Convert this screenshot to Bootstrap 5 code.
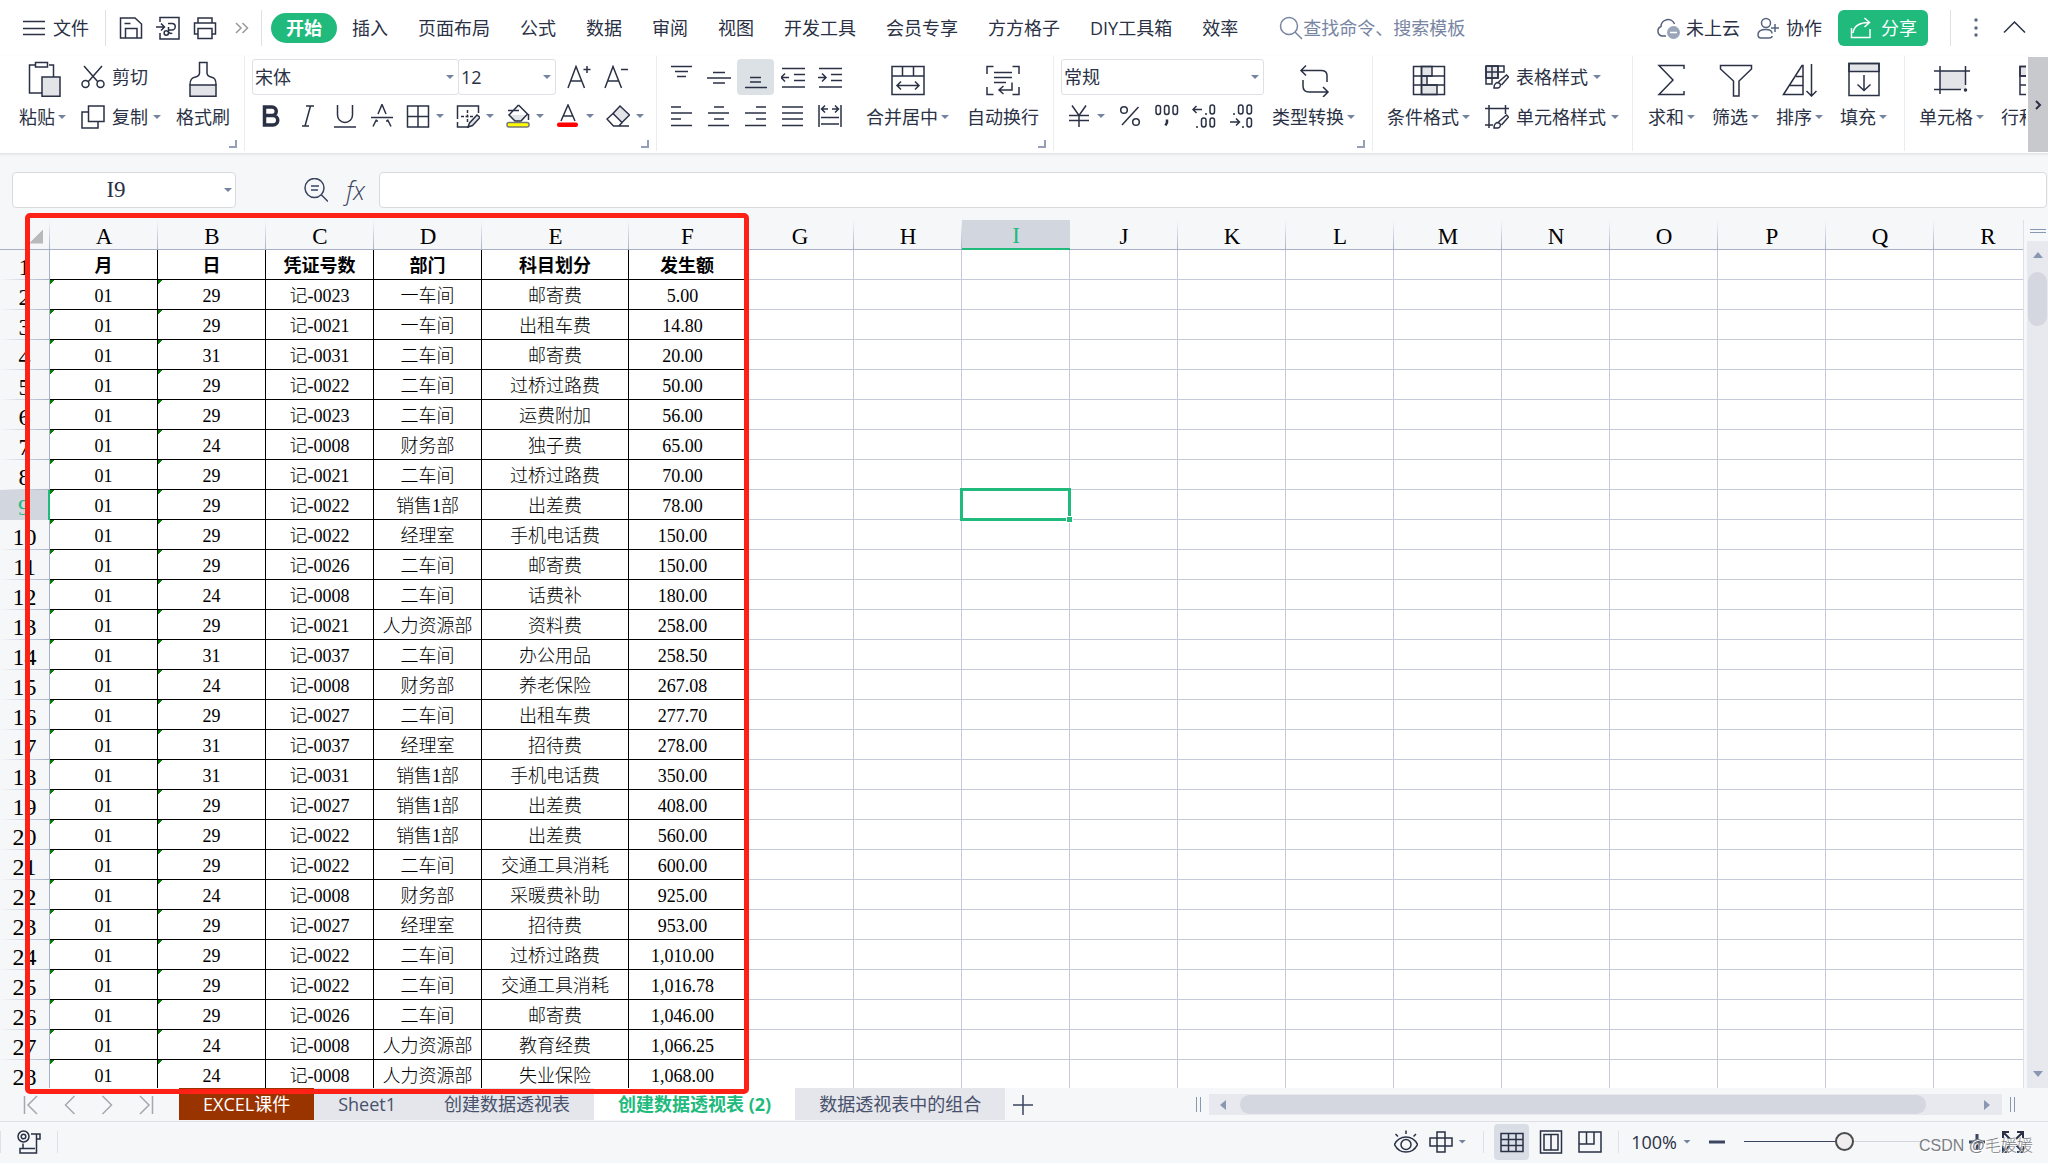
<!DOCTYPE html>
<html lang="zh-CN">
<head>
<meta charset="utf-8">
<meta name="viewport" content="width=device-width, initial-scale=1">
<title>创建数据透视表 (2)</title>
<link href="https://cdn.jsdelivr.net/npm/bootstrap@5.3.0/dist/css/bootstrap.min.css" rel="stylesheet">
<style>
:root{--ink:#2a3145;--soft:#7785a3;--green:#21ba7d;--pane:#f6f7f9;--line:#dfe0e5;--gridline:#c6cada;--headline:#a8b1c8}
body{font-family:"Open Sans","Noto Sans CJK SC",sans-serif;font-size:18px;font-weight:400;line-height:24px;color:var(--ink);background:var(--pane)}
button,input,select{font:inherit;color:inherit}
button{background:none;border:0;padding:0;color:inherit;white-space:nowrap}
svg{display:block;flex:none}
svg:not([fill]){fill:none}
svg:not([stroke]){stroke:currentColor}
svg:not([stroke-width]){stroke-width:1.5}
.ic{width:24px;height:24px}
.ic-lg{width:36px;height:36px}
.arr{display:block;flex:none;width:8px;height:4px;background:#7484a0;clip-path:polygon(0 0,100% 0,50% 100%)}
.fill{fill:#e3e4e8}
/* menu line */
.menubar{height:56px;background:#fff;padding-right:22px}
.file-btn{padding:0 16px 0 22px;gap:7px}
.rule{width:1px;height:36px;background:var(--line)}
.quick{gap:13px;padding:0 7px 0 13px}
.tabs-main{padding-left:9px}
.tabs-main a{color:inherit;text-decoration:none;padding:3px 15px;border-radius:15px;white-space:nowrap}
.tabs-main a.on{background:var(--green);color:#fff;font-weight:700}
.finder{margin-left:26px;color:var(--soft)}
.finder input{width:190px;border:0;outline:0;background:none;padding:0}
.finder input::placeholder{color:var(--soft);opacity:1}
.acct{gap:6px;margin-right:16px}
.share{height:36px;width:90px;border-radius:6px;background:var(--green);color:#fff;gap:8px;margin-right:22px}
/* ribbon */
.ribbon{background:#fff;height:98px;border-bottom:1px solid #e3e4e6;box-shadow:0 1px 3px #0000000f}
.ribbon-body{min-width:0;height:95px}
.grp{position:relative;flex:none;display:flex;padding-top:3px;border-right:1px solid #ebecef}
.grp:last-child{border:0}
.launch{position:absolute;right:7px;bottom:3px;width:8px;height:8px;border:solid #95a0b8;border-width:0 2px 2px 0}
.big{display:flex;flex-direction:column;align-items:center;gap:8px;padding-top:2px;height:80px}
.lbl{display:flex;align-items:center;gap:3px}
.pair{display:flex;flex-direction:column;gap:4px}
.pair button{display:flex;align-items:center;height:36px;gap:7px}
.pair .arr{margin-left:-2px}
.tools{display:flex;align-items:center;height:36px}
.stack{display:flex;flex-direction:column;gap:3px}
.tool{width:37px;height:36px;display:flex;align-items:center;justify-content:center;border-radius:4px}
.tool.on{background:#dce1e6}
.drop{width:50px;height:36px;display:flex;align-items:center}
.drop svg{margin:0 6px}
.pick{position:relative}
.pick select{appearance:none;width:100%;height:36px;border:1px solid var(--line);background:#fff;border-radius:3px;padding:0 4px 0 2px;outline:0}
.pick .arr{position:absolute;right:5px;top:16px;pointer-events:none}
.w-font{width:207px}.w-size{width:98px;margin:0 4px 0 -1px}.w-num{width:203px}
.more{width:20px;height:95px;margin:1px 0 0 2px;background:#c8c9cd;display:flex;align-items:center;justify-content:center}
/* formula line */
.formula{padding:18px 1px 12px 12px}
.formula input{height:36px;border:1px solid #d8dade;border-radius:4px;background:#fff;outline:0}
.namebox{position:relative;width:224px;margin-right:68px}
.namebox input{width:100%;padding-right:18px;text-align:center;font-family:"Liberation Serif",serif;font-size:23px}
.namebox .arr{position:absolute;right:4px;top:16px}
.fx{font-style:italic;font-weight:300;font-size:25px;width:25px;margin:0 11px 0 15px;color:#3b4560}
/* sheet */
.sheet{position:relative;min-height:0}
.cells{overflow:hidden;min-width:0;border-right:1px solid var(--line);height:100%}
.cells table{table-layout:fixed;width:2042px;border-collapse:separate;border-spacing:0;color:#000;font-family:"Liberation Serif","Noto Sans CJK SC",serif;font-weight:300}
.cells th,.cells td{height:30px;padding:2px 0 0;text-align:center;line-height:26px;white-space:nowrap;overflow:visible}
.cells td{background-color:#fff;border-right:1px solid var(--gridline);border-bottom:1px solid var(--gridline)}
.cells td.d{border-color:#000}
.cells td.h{font-weight:700}
.cells td.amt{padding-right:9px}
.cells td.flag{background-image:linear-gradient(135deg,#008000 3px,transparent 3px)}
.cells thead th{font-size:23px;font-weight:400;padding-top:4px;line-height:24px;border-bottom:1px solid var(--headline);background:linear-gradient(to bottom,transparent,var(--headline)) right/1px 100% no-repeat}
.cells thead th.cur{background:#d2d6df;color:var(--green);border-bottom:2px solid var(--green)}
.cells tbody th{font-size:24px;font-weight:400;padding-top:3px;line-height:24px;border-right:1px solid var(--headline);background:linear-gradient(to right,transparent,var(--headline)) bottom/100% 1px no-repeat}
.cells tbody th.cur{background:#d2d6df;color:var(--green);border-right:2px solid var(--green)}
.all::after{content:"";display:block;width:14px;height:14px;margin:4px 0 0 29px;background:#b9b9b9;clip-path:polygon(100% 0,100% 100%,0 100%)}
.cells td.sel{position:relative}
.sel::before{content:"";position:absolute;inset:-2px;border:3px solid var(--green);z-index:1}
.sel::after{content:"";position:absolute;right:-4px;bottom:-4px;width:7px;height:7px;background:var(--green);border:1px solid #fff;z-index:2}
.frame{position:absolute;left:25px;top:-7px;bottom:-6px;width:724px;border:5px solid #ff2116;border-radius:5px;z-index:3;pointer-events:none}
.vbar{width:24px;padding-left:3px}
.split{width:16px;height:4px;border:solid #8a97b2;border-width:1px 0;margin:9px auto 8px}
.vtrack{background:#e8e9ef}
.vthumb{width:19px;height:54px;border-radius:10px;background:#d4d7e0}
/* sheet tabs */
.tabline{height:34px;border-bottom:1px solid var(--line)}
.nav-sheets{width:179px;padding:0 25px 0 23px;color:#a6a8ae}
.stab{height:32px;line-height:32px;padding:0 24px;background:#e5e6ec;color:#47516b;text-decoration:none;white-space:nowrap}
.stab.brown{background:#993300;color:#fff}
.stab.on{background:#fff;color:var(--green);font-weight:700}
.grip{width:5px;height:15px;border:solid #8a97b2;border-width:0 1px}
.htrack{height:21px;width:793px;background:#e8e9ef;padding:1px 12px 1px 11px;margin:0 8px}
.hthumb{height:19px;width:686px;border-radius:10px;background:#d4d7e0}
/* status line */
.status{height:41px;position:relative;padding:0 23px 2px 0}
.status .rule{height:22px}
.view{width:35px;height:36px;display:flex;align-items:center;justify-content:center;border-radius:4px}
.view.on{background:#d9dee6}
.zoomer{appearance:none;width:201px;height:20px;margin:0 24px 0 18px;background:linear-gradient(90deg,#3b4560 50%,#d2d5de 50%) center/100% 1px no-repeat}
.zoomer::-webkit-slider-thumb{appearance:none;width:19px;height:19px;border-radius:50%;border:2px solid #4b4b4b;background:#efeded}
.mark-csdn{position:absolute;right:15px;top:12px;font-family:"Liberation Sans","Noto Sans CJK SC",sans-serif;font-size:16px;font-weight:300;color:#7d7f84;text-shadow:1px 1px 0 #fff}
</style>
<script src="https://cdn.jsdelivr.net/npm/bootstrap@5.3.0/dist/js/bootstrap.bundle.min.js"></script>
</head>
<body class="vh-100 d-flex flex-column overflow-hidden">

<header class="menubar d-flex align-items-center flex-shrink-0">
  <button class="file-btn d-flex align-items-center"><svg class="ic" viewBox="0 0 24 24"><path d="M1 5.500h22M1 12.500h22M1 18.500h22"/></svg>文件</button>
  <span class="rule"></span>
  <div class="quick d-flex align-items-center">
    <button aria-label="保存"><svg class="ic" viewBox="0 0 24 24"><path d="M1.500 2h14.500l6.500 6v14H1.500zM6.500 22V12.500H18V22M5.500 7.500h6"/></svg></button>
    <button aria-label="输出为PDF"><svg class="ic" viewBox="0 0 24 24"><path d="M4 6V1.500h19v21.500H4V17M0 11h8M5 7.500l3.500 3.500L5 14.500M12 7.500h4a3.200 3.200 0 0 1 0 6.500h-3.500M12.500 11v6a2.200 2.200 0 1 1-2.200-2.200c2 0 3 4.200 6 2.200"/></svg></button>
    <button aria-label="打印"><svg class="ic" viewBox="0 0 24 24"><path d="M5 7V2h14v5M5 18H1.500V7h21v11H19M5 12.500h14v10H5z"/></svg></button>
    <button aria-label="更多"><svg class="ic" viewBox="0 0 24 24" stroke="#9a9a9a"><path d="M6 7l5 5-5 5M12.500 7l5 5-5 5"/></svg></button>
  </div>
  <span class="rule"></span>
  <nav class="tabs-main d-flex align-items-center">
    <a href="#" class="on">开始</a><a href="#">插入</a><a href="#">页面布局</a><a href="#">公式</a><a href="#">数据</a><a href="#">审阅</a><a href="#">视图</a><a href="#">开发工具</a><a href="#">会员专享</a><a href="#">方方格子</a><a href="#">DIY工具箱</a><a href="#">效率</a>
  </nav>
  <label class="finder d-flex align-items-center"><svg class="ic" viewBox="0 0 24 24"><circle cx="10" cy="10" r="8.500"/><path d="M16 16l7 7"/></svg><input type="text" placeholder="查找命令、搜索模板" aria-label="查找命令"></label>
  <div class="d-flex align-items-center ms-auto">
    <button class="acct d-flex align-items-center"><svg class="ic" viewBox="0 0 24 24" stroke="#56617c"><path d="M10 20H6a5 5 0 0 1-1-9.500A7 7 0 0 1 18.500 8"/><circle cx="17.500" cy="16.500" r="6.500" fill="#9ba5ba" stroke="none"/><path d="M14 16.500h7" stroke="#fff"/></svg>未上云</button>
    <button class="acct d-flex align-items-center"><svg class="ic" viewBox="0 0 24 24" stroke="#56617c"><circle cx="10" cy="7" r="4.500"/><path d="M16 17.500c0-3-2-4-6-4s-8 1-8 5c0 3 1 3.500 3 3.500h8c2 0 3-1 3-2M19 8v8M15 12h8"/></svg>协作</button>
    <button class="share d-flex align-items-center justify-content-center"><svg class="ic" viewBox="0 0 24 24"><path d="M2.500 12v9.500h18.500V13M4 17c1-7 6-10.500 16-10.500M15.500 2l5 4.500-5 4.500"/></svg>分享</button>
    <span class="rule"></span>
    <button class="ms-3" aria-label="更多选项"><svg class="ic" viewBox="0 0 24 24" stroke="none" fill="#5c6680"><circle cx="9" cy="4" r="1.700"/><circle cx="9" cy="12" r="1.700"/><circle cx="9" cy="19" r="1.700"/></svg></button>
    <button style="margin-left:11px" aria-label="折叠功能区"><svg class="ic" viewBox="0 0 24 24"><path d="M2 16.500L12.500 6 23 16.500"/></svg></button>
  </div>
</header>

<section class="ribbon d-flex flex-shrink-0">
  <div class="ribbon-body d-flex flex-grow-1 overflow-hidden">
    <div class="grp" style="padding-left:19px;padding-right:14px;gap:15px">
      <button class="big"><svg class="ic-lg" viewBox="0 0 36 36"><path d="M10 4H4.500v28H17M24 4h4.500v12M10.500 1.500h12V6h-12z"/><path class="fill" d="M17 16h18v19.200H17z"/></svg><span class="lbl">粘贴<i class="arr"></i></span></button>
      <div class="pair">
        <button><svg class="ic" viewBox="0 0 24 24"><path d="M3 1l14 16M21 1L7 17"/><circle cx="4.500" cy="19" r="3.500"/><circle cx="19.500" cy="19" r="3.500"/></svg>剪切</button>
        <button><svg class="ic" viewBox="0 0 24 24"><path d="M7.500 1h15.500v15.500H7.500zM7.500 7H1v16h16v-6.500"/></svg>复制<i class="arr"></i></button>
      </div>
      <button class="big"><svg class="ic-lg" viewBox="0 0 36 36"><path class="fill" d="M5 24h26v11.200H5z"/><path d="M5 24c0-6 2-7 5.500-8 3-.8 4-1.500 4-4V1.500h7.500V12c0 2.500 1 3.200 4 4 3.500 1 5 2 5 8"/></svg><span class="lbl">格式刷</span></button>
      <i class="launch"></i>
    </div>

    <div class="grp" style="padding-left:7px;padding-right:6px">
      <div class="stack">
        <div class="tools">
          <div class="pick w-font"><select aria-label="字体"><option>宋体</option></select><i class="arr"></i></div>
          <div class="pick w-size"><select aria-label="字号"><option>12</option></select><i class="arr"></i></div>
          <button class="tool" aria-label="增大字号"><svg class="ic" viewBox="0 0 24 24"><path d="M1 23L9 1.500 17.500 23M4 16h10.500M16.500 4.500h7M20 1v7"/></svg></button>
          <button class="tool" aria-label="减小字号"><svg class="ic" viewBox="0 0 24 24"><path d="M1 23L9 1.500 17.500 23M4 16h10.500M17 4.500h7"/></svg></button>
        </div>
        <div class="tools">
          <button class="tool" aria-label="加粗"><svg class="ic" viewBox="0 0 24 24" stroke-width="3.500"><path d="M5.500 3h7.500a4.200 4.200 0 0 1 0 8.500H5.500zM5.500 11.500h8.500a4.600 4.600 0 0 1 0 9.500H5.500z"/></svg></button>
          <button class="tool" aria-label="倾斜"><svg class="ic" viewBox="0 0 24 24"><path d="M10 2h8M6 22h7M14.500 2L9 22"/></svg></button>
          <button class="tool" aria-label="下划线"><svg class="ic" viewBox="0 0 24 24"><path d="M4.500 1v10a7.500 7.500 0 0 0 15 0V1M1 23h22"/></svg></button>
          <button class="tool" aria-label="删除线"><svg class="ic" viewBox="0 0 24 24"><path d="M8 10l4-9.500L16 10M1 13.500h22M6.500 15.500L3 22.500M17.500 15.500L21 22.500M6 17h2M16 17h2"/></svg></button>
          <button class="drop" aria-label="边框"><svg class="ic" viewBox="0 0 24 24"><path d="M1.500 2h21v21h-21zM12 2v21M1.500 12.500h21"/></svg><i class="arr"></i></button>
          <button class="drop" aria-label="绘制边框"><svg class="ic" viewBox="0 0 24 24"><path d="M1.500 15V2h21v7M1.500 18v5H13"/><path d="M11.500 6v12M5 12.500h12" stroke-dasharray="3 1.500"/><path class="fill" d="M12 23l1.500-4 7.500-8 3 2.500-7.500 8z"/></svg><i class="arr"></i></button>
          <button class="drop" aria-label="填充颜色"><svg class="ic" viewBox="0 0 24 24"><path class="fill" d="M3 11h18l-5 6H9z" stroke="none"/><path d="M2 6.500h11M12.500 1l9 9-6.500 7H9L3 11 12.500 1M22.500 10v6"/><rect x="1" y="18.500" width="22" height="4.500" rx="2" fill="#ff0" stroke="#777"/></svg><i class="arr"></i></button>
          <button class="drop" aria-label="字体颜色"><svg class="ic" viewBox="0 0 24 24"><path d="M5 17l7-16 7 16M7.500 12h9"/><rect x="1" y="18.500" width="21" height="4.500" rx="2" fill="red" stroke="none"/></svg><i class="arr"></i></button>
          <button class="drop" aria-label="清除"><svg class="ic" viewBox="0 0 24 24"><path class="fill" d="M14 2l9.500 9-7.500 7.500-9-9z"/><path d="M7 9.500L1 15l6.500 7H13l3-3.500M7.500 22H23"/></svg><i class="arr"></i></button>
        </div>
      </div>
      <i class="launch"></i>
    </div>

    <div class="grp" style="padding-left:6px;padding-right:14px;gap:18px">
      <div class="stack">
        <div class="tools">
          <button class="tool" aria-label="顶端对齐"><svg class="ic" viewBox="0 0 24 24"><path d="M1 1.500h21M5 6.500h13M7 11.500h9"/></svg></button>
          <button class="tool" aria-label="垂直居中"><svg class="ic" viewBox="0 0 24 24"><path d="M6 7.500h12M0 13h24M6 18h12"/></svg></button>
          <button class="tool on" aria-label="底端对齐"><svg class="ic" viewBox="0 0 24 24"><path d="M6 12.500h11M6 17h11M1 22.500h22"/></svg></button>
          <button class="tool" aria-label="减少缩进"><svg class="ic" viewBox="0 0 24 24"><path d="M1 3.500h23M13 9.500h11M13 15.500h11M1 22h23M0 12.500h8M4 8.500l-4 4 4 4"/></svg></button>
          <button class="tool" aria-label="增加缩进"><svg class="ic" viewBox="0 0 24 24"><path d="M1 3.500h23M13 9.500h11M13 15.500h11M1 22h23M0 12.500h8M4 8.500l4 4-4 4"/></svg></button>
        </div>
        <div class="tools">
          <button class="tool" aria-label="左对齐"><svg class="ic" viewBox="0 0 24 24"><path d="M1 3h10M1 9h21M1 15h10M1 21.500h21"/></svg></button>
          <button class="tool" aria-label="水平居中"><svg class="ic" viewBox="0 0 24 24"><path d="M7 3h10M1 9h21M7 15h10M1 21.500h21"/></svg></button>
          <button class="tool" aria-label="右对齐"><svg class="ic" viewBox="0 0 24 24"><path d="M12 3h10M1 9h21M12 15h10M1 21.500h21"/></svg></button>
          <button class="tool" aria-label="两端对齐"><svg class="ic" viewBox="0 0 24 24"><path d="M1 3h21M1 9h21M1 15h21M1 21.500h21"/></svg></button>
          <button class="tool" aria-label="分散对齐"><svg class="ic" viewBox="0 0 24 24"><path d="M1 1v22M23 1v22M3 13.500h18M3 20h18M4 5h6M14 5h6M7 1.500L3.500 5 7 8.500M17 1.500L20.500 5 17 8.500"/></svg></button>
        </div>
      </div>
      <button class="big"><svg class="ic-lg" viewBox="0 0 36 36"><path d="M2 5.500h32v28H2zM2 15h32M12.500 5.500V15M23.500 5.500V15M7 24.500h22M11 20.500l-4 4 4 4M25 20.500l4 4-4 4"/></svg><span class="lbl">合并居中<i class="arr"></i></span></button>
      <button class="big"><svg class="ic-lg" viewBox="0 0 36 36"><path d="M2 13V5.500h6.500M27.500 5.500H34V13M2 26v7.500h6.500M27.500 33.500H34V26M9 11.500h18M9 16.500h18M9 21.500h12M27 21.500V29H15M18.500 25L14 29l4.500 4"/></svg><span class="lbl">自动换行</span></button>
      <i class="launch"></i>
    </div>

    <div class="grp" style="padding-left:7px;padding-right:17px;gap:8px">
      <div class="stack">
        <div class="tools"><div class="pick w-num"><select aria-label="数字格式"><option>常规</option></select><i class="arr"></i></div></div>
        <div class="tools">
          <button class="drop" aria-label="货币"><svg class="ic" viewBox="0 0 24 24"><path d="M5 1.500l7 10 7-10M2 11.500h20M2 16.500h20M12 11.500V23"/></svg><i class="arr"></i></button>
          <button class="tool" aria-label="百分比"><svg class="ic" viewBox="0 0 24 24"><circle cx="6" cy="6" r="3.300"/><circle cx="18" cy="18" r="3.300"/><path d="M20.500 3L4 21"/></svg></button>
          <button class="tool" aria-label="千位分隔"><svg class="ic" viewBox="0 0 24 24"><rect x="1" y="1.500" width="4.500" height="9" rx="2.200"/><rect x="9.500" y="1.500" width="4.500" height="9" rx="2.200"/><rect x="18" y="1.500" width="4.500" height="9" rx="2.200"/><path d="M12 15.500v3l-1.500 3" stroke-width="2.500"/></svg></button>
          <button class="tool" aria-label="增加小数位"><svg class="ic" viewBox="0 0 24 24"><rect x="18" y="1" width="4.500" height="9" rx="2.200"/><rect x="9.500" y="14" width="4.500" height="9" rx="2.200"/><rect x="18" y="14" width="4.500" height="9" rx="2.200"/><path d="M1 5.500h9M4.500 2L1 5.500 4.500 9M13 10h2M4 23h2"/></svg></button>
          <button class="tool" aria-label="减少小数位"><svg class="ic" viewBox="0 0 24 24"><rect x="9.500" y="1" width="4.500" height="9" rx="2.200"/><rect x="18" y="1" width="4.500" height="9" rx="2.200"/><rect x="18" y="14" width="4.500" height="9" rx="2.200"/><path d="M1 18h9M7 14.500l3.500 3.500L7 21.500M4 10h2M13 23h2"/></svg></button>
        </div>
      </div>
      <button class="big"><svg class="ic-lg" viewBox="0 0 36 36"><path d="M5 9.500h20c4 0 6 1.500 6 5V21M10 4.500l-5 5 5 5M7 19v6c0 4 2 6 6 6h19M27 26l5 5-5 5"/></svg><span class="lbl">类型转换<i class="arr"></i></span></button>
      <i class="launch"></i>
    </div>

    <div class="grp" style="padding-left:14px;padding-right:13px;gap:15px">
      <button class="big"><svg class="ic-lg" viewBox="0 0 36 36"><path class="fill" d="M10.500 5.500H21V15H10.500zM10.500 15H16v9h-5.500zM10.500 24H26v9.500H10.500z"/><path d="M2.500 5.500h31v28h-31zM2.500 15h31M2.500 24h31M10.500 5.500v28"/></svg><span class="lbl">条件格式<i class="arr"></i></span></button>
      <div class="pair">
        <button><svg class="ic" viewBox="0 0 24 24"><path class="fill" d="M1 1h12v12H1z"/><path d="M1 1h18v6H1M1 1v18h6V1M1 13h12V1M9 23c0-5 3-6 5-5s2 4-1 5zM13.500 17l8-7 2 2-7 8"/></svg>表格样式<i class="arr"></i></button>
        <button><svg class="ic" viewBox="0 0 24 24"><path d="M0 3.500h24M4 0v23M20.500 0v9M0 20h8M9 23c0-5 3-6 5-5s2 4-1 5zM13.500 17l8-7 2 2-7 8"/></svg>单元格样式<i class="arr"></i></button>
      </div>
    </div>

    <div class="grp" style="padding-left:15px;padding-right:17px;gap:17px">
      <button class="big"><svg class="ic-lg" viewBox="0 0 36 36"><path d="M30 8V4.500H5L19 19 5 33.500h25V30"/></svg><span class="lbl">求和<i class="arr"></i></span></button>
      <button class="big"><svg class="ic-lg" viewBox="0 0 36 36"><path d="M2.500 4.500h31V8L21 20v15h-5.500V20L2.500 8z"/></svg><span class="lbl">筛选<i class="arr"></i></span></button>
      <button class="big"><svg class="ic-lg" viewBox="0 0 36 36"><path d="M1.500 33.500L20 4.500h1v29zM14 15.500h7M8 24.500h13M29.500 3v32M24.500 30l5 5 5-5"/></svg><span class="lbl">排序<i class="arr"></i></span></button>
      <button class="big"><svg class="ic-lg" viewBox="0 0 36 36"><path class="fill" d="M3 2.500h30v8H3z"/><path d="M3 2.500h30V34.500H3zM18 14v15M11.500 23.500L18 29.500l6.500-6"/></svg><span class="lbl">填充<i class="arr"></i></span></button>
    </div>

    <div class="grp" style="padding-left:14px;gap:17px">
      <button class="big"><svg class="ic-lg" viewBox="0 0 36 36"><path class="fill" stroke="none" d="M6 10h26v18H6z"/><path d="M0 10h36M6 5v28M31.500 5v19M0 28.500h27"/><circle cx="31.500" cy="29" r="1" fill="currentColor"/></svg><span class="lbl">单元格<i class="arr"></i></span></button>
      <button class="big"><svg class="ic-lg" viewBox="0 0 36 36"><path class="fill" d="M4 5.500h28V15H4z"/><path d="M4 5.500h28v28H4zM4 15h28M4 24h28M12 15v18.500"/></svg><span class="lbl">行和列<i class="arr"></i></span></button>
    </div>
  </div>
  <button class="more" aria-label="向右滚动"><svg width="8" height="10" viewBox="0 0 8 10" stroke-width="2"><path d="M2 1l4 4-4 4"/></svg></button>
</section>

<section class="formula d-flex align-items-center flex-shrink-0">
  <div class="namebox"><input type="text" value="I9" aria-label="名称框"><i class="arr"></i></div>
  <button aria-label="查找函数"><svg class="ic" viewBox="0 0 24 24" stroke="#3b4560"><circle cx="10.500" cy="10" r="9.500"/><path d="M17 16.500l7 7M7 8h8M7 12h7"/></svg></button>
  <button class="fx">fx</button>
  <input type="text" class="flex-grow-1" aria-label="编辑栏">
</section>

<main class="sheet d-flex flex-grow-1">
  <div class="cells flex-grow-1">
    <table>
      <colgroup id="widths"></colgroup>
      <thead><tr id="letters"></tr></thead>
      <tbody id="grid"></tbody>
    </table>
  </div>
  <div class="vbar d-flex flex-column">
    <div class="split"></div>
    <div class="vtrack flex-grow-1 d-flex flex-column align-items-center">
      <svg width="10" height="6" viewBox="0 0 10 6" style="margin:11px 0 14px" stroke="none" fill="#8a97b2"><path d="M0 6l5-6 5 6z"/></svg>
      <div class="vthumb"></div>
      <svg class="mt-auto" width="10" height="6" viewBox="0 0 10 6" style="margin-bottom:11px" stroke="none" fill="#8a97b2"><path d="M0 0l5 6 5-6z"/></svg>
    </div>
  </div>
  <div class="frame"></div>
</main>

<section class="tabline d-flex flex-shrink-0">
  <div class="nav-sheets d-flex align-items-center justify-content-between">
    <button aria-label="第一张"><svg width="15" height="20" viewBox="0 0 15 20"><path d="M1.500 1v18M14 1L5 10l9 9"/></svg></button>
    <button aria-label="上一张"><svg width="12" height="20" viewBox="0 0 12 20"><path d="M10.500 1l-9 9 9 9"/></svg></button>
    <button aria-label="下一张"><svg width="12" height="20" viewBox="0 0 12 20"><path d="M1.500 1l9 9-9 9"/></svg></button>
    <button aria-label="最后一张"><svg width="15" height="20" viewBox="0 0 15 20"><path d="M13.500 1v18M1 1l9 9-9 9"/></svg></button>
  </div>
  <a href="#" class="stab brown">EXCEL课件</a><a href="#" class="stab">Sheet1</a><a href="#" class="stab">创建数据透视表</a><a href="#" class="stab on">创建数据透视表 (2)</a><a href="#" class="stab">数据透视表中的组合</a>
  <button class="ms-2" aria-label="新建工作表"><svg width="20" height="20" viewBox="0 0 20 20" stroke="#3b4560"><path d="M0 10h20M10 0v20"/></svg></button>
  <div class="d-flex align-items-center ms-auto" style="padding-right:33px">
    <i class="grip"></i>
    <div class="htrack d-flex align-items-center justify-content-between">
      <svg width="6" height="10" viewBox="0 0 6 10" stroke="none" fill="#8a97b2"><path d="M6 0L0 5l6 5z"/></svg>
      <div class="hthumb" style="margin-right:44px"></div>
      <svg width="6" height="10" viewBox="0 0 6 10" stroke="none" fill="#8a97b2"><path d="M0 0l6 5-6 5z"/></svg>
    </div>
    <i class="grip"></i>
  </div>
</section>

<footer class="status d-flex align-items-center flex-shrink-0">
  <span class="rule"></span>
  <button class="mx-3" aria-label="录制宏"><svg class="ic" viewBox="0 0 24 24"><circle cx="6.500" cy="6.500" r="5.500"/><circle cx="6.500" cy="6.500" r="2.300"/><path d="M14 4h9v5h-3.500M19.500 4v19H3v-4.500h15M6 13.500v5"/></svg></button>
  <span class="rule"></span>
  <div class="d-flex align-items-center ms-auto">
    <button aria-label="护眼模式"><svg class="ic" viewBox="0 0 24 24"><path d="M.5 14.500c5-10 18-10 23 0-5 10-18 10-23 0zM12 .5V4M1.500 4L4 6.500M22 4l-2.500 2.500"/><circle cx="12" cy="14.500" r="5"/></svg></button>
    <button class="d-flex align-items-center" style="margin:0 17px 0 11px;gap:5px" aria-label="阅读模式"><svg class="ic" viewBox="0 0 24 24"><path d="M8 2h8v20H8zM1 8h22v8H1z"/></svg><i class="arr"></i></button>
    <span class="rule"></span>
    <button class="view on" style="margin-left:10px" aria-label="普通视图"><svg class="ic" viewBox="0 0 24 24"><path d="M1 3.500h22v18H1zM1 9.500h22M1 15.500h22M8.500 3.500v18M16 3.500v18"/></svg></button>
    <button class="view" style="margin:0 4px" aria-label="分页预览"><svg class="ic" viewBox="0 0 24 24"><path d="M1.500 1h21v22h-21zM5 4.500h14v15.500H5zM12 4.500v15.500"/></svg></button>
    <button class="view" style="margin-right:11px" aria-label="页面布局视图"><svg class="ic" viewBox="0 0 24 24"><path d="M1 2h22v20H1zM1 14h15V2M8.500 2v12"/></svg></button>
    <span class="rule"></span>
    <button class="d-flex align-items-center" style="margin:0 17px 0 12px;gap:6px">100%<i class="arr"></i></button>
    <button aria-label="缩小"><svg width="18" height="18" viewBox="0 0 18 18" stroke="#3b4560" stroke-width="3"><path d="M1 9h16"/></svg></button>
    <input type="range" class="zoomer" aria-label="缩放比例" min="0" max="200" value="100">
    <button aria-label="放大"><svg width="16" height="16" viewBox="0 0 16 16" stroke="#3b4560" stroke-width="3"><path d="M0 8h16M8 0v16"/></svg></button>
    <button style="margin-left:16px" aria-label="全屏"><svg class="ic" viewBox="0 0 24 24" stroke-width="2"><path d="M2 8V2h6M16 2h6v6M2 16v6h6M22 16v6h-6M2 2l7 7M22 2l-7 7M2 22l7-7M22 22l-7-7"/></svg></button>
  </div>
  <span class="mark-csdn">CSDN @毛媛媛</span>
</footer>

<script>
const rows = `29 0023 一车间 邮寄费 5.00
29 0021 一车间 出租车费 14.80
31 0031 二车间 邮寄费 20.00
29 0022 二车间 过桥过路费 50.00
29 0023 二车间 运费附加 56.00
24 0008 财务部 独子费 65.00
29 0021 二车间 过桥过路费 70.00
29 0022 销售1部 出差费 78.00
29 0022 经理室 手机电话费 150.00
29 0026 二车间 邮寄费 150.00
24 0008 二车间 话费补 180.00
29 0021 人力资源部 资料费 258.00
31 0037 二车间 办公用品 258.50
24 0008 财务部 养老保险 267.08
29 0027 二车间 出租车费 277.70
31 0037 经理室 招待费 278.00
31 0031 销售1部 手机电话费 350.00
29 0027 销售1部 出差费 408.00
29 0022 销售1部 出差费 560.00
29 0022 二车间 交通工具消耗 600.00
24 0008 财务部 采暖费补助 925.00
29 0027 经理室 招待费 953.00
29 0022 二车间 过桥过路费 1,010.00
29 0022 二车间 交通工具消耗 1,016.78
29 0026 二车间 邮寄费 1,046.00
24 0008 人力资源部 教育经费 1,066.25
24 0008 人力资源部 失业保险 1,068.00`.split("\n").map(r => {
  const [day, no, dept, kind, sum] = r.split(" ");
  return ["01", day, "记-" + no, dept, kind, sum];
});
rows.unshift(["月", "日", "凭证号数", "部门", "科目划分", "发生额"]);
const cols = [..."ABCDEFGHIJKLMNOPQR"];
const widths = {E: 147, F: 117};
document.getElementById("widths").innerHTML =
  '<col style="width:50px">' + cols.map(c => `<col style="width:${widths[c] || 108}px">`).join("");
document.getElementById("letters").innerHTML =
  '<th class="all p-0"></th>' + cols.map(c => `<th class="${c === "I" ? "cur" : ""}">${c}</th>`).join("");
document.getElementById("grid").innerHTML = rows.map((r, n) =>
  `<tr><th class="${n === 8 ? "cur" : ""}">${n + 1}</th>` + cols.map((c, i) => {
    const k = [];
    if (i < 6) k.push("d");
    if (i < 6 && n === 0) k.push("h");
    if (i < 2 && n > 0) k.push("flag");
    if (i === 5 && n > 0) k.push("amt");
    if (c === "I" && n === 8) k.push("sel");
    return `<td class="${k.join(" ")}">${r[i] || ""}</td>`;
  }).join("") + "</tr>").join("");
</script>
</body>
</html>
